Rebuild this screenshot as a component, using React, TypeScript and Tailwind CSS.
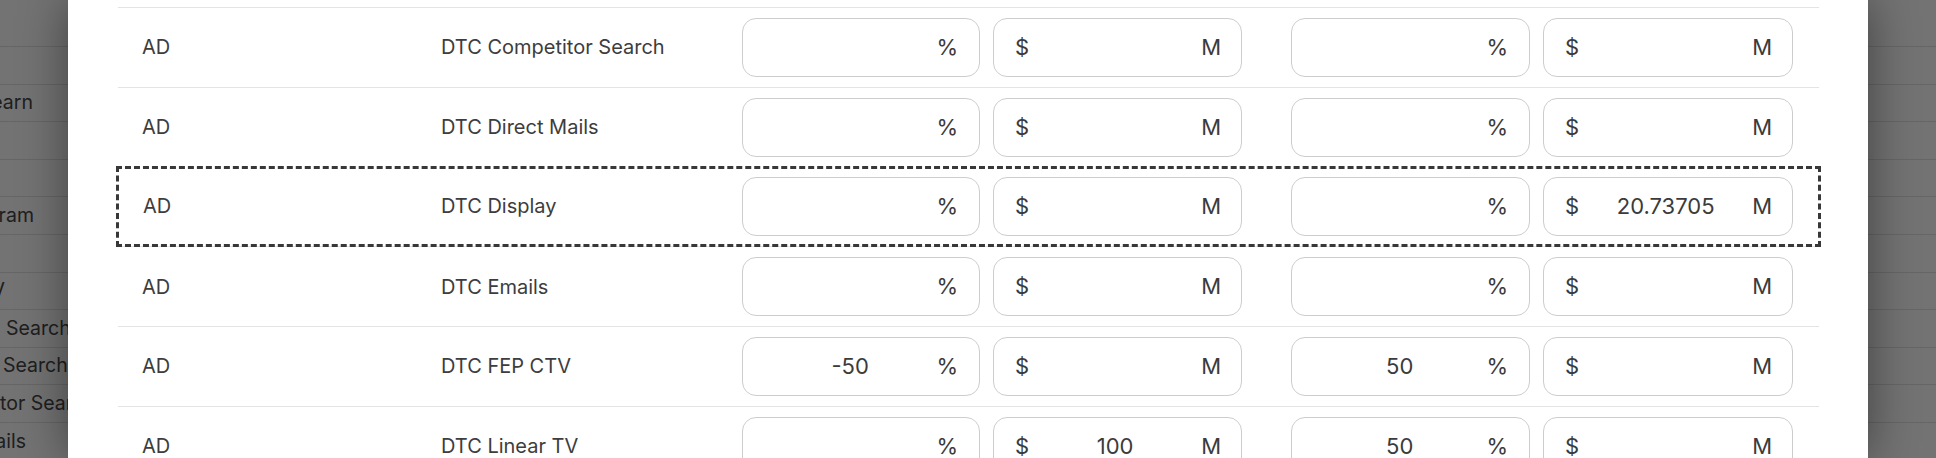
import React from "react";

type Cell = { pct?: string; amt?: string };
type Row = { a: string; b: string; c3: Cell; c4: Cell; focus?: boolean };

const rows: Row[] = [
  { a: "AD", b: "DTC Competitor Search", c3: {}, c4: {} },
  { a: "AD", b: "DTC Direct Mails", c3: {}, c4: {} },
  { a: "AD", b: "DTC Display", c3: {}, c4: { amt: "20.73705" }, focus: true },
  { a: "AD", b: "DTC Emails", c3: {}, c4: {} },
  { a: "AD", b: "DTC FEP CTV", c3: { pct: "-50" }, c4: { pct: "50" } },
  { a: "AD", b: "DTC Linear TV", c3: { amt: "100" }, c4: { pct: "50" } },
];

// underlying page rows: either right-anchored (end) or left-started (start)
const bgRows: { text: string; end?: number; start?: number }[] = [
  { text: "" },
  { text: "" },
  { text: "Paid Learn", end: 33 },
  { text: "" },
  { text: "" },
  { text: "Instagram", end: 34 },
  { text: "" },
  { text: "DTC CTV", end: 5 },
  { text: "Search", start: 6 },
  { text: "Search", start: 3 },
  { text: "tor Search", start: 0 },
  { text: "DTC Emails", end: 26 },
];

function PctBox({ value, w }: { value?: string; w: string }) {
  return (
    <div
      className={`${w} h-[59px] flex items-center rounded-[14px] border border-[#cdcdcd] bg-white pl-[21px] pr-[21px] text-[22px] text-[#3b3b3b]`}
    >
      <div className="flex-1 text-center">{value ?? ""}</div>
      <span>%</span>
    </div>
  );
}

function AmtBox({ value, w }: { value?: string; w: string }) {
  return (
    <div
      className={`${w} h-[59px] flex items-center rounded-[14px] border border-[#cdcdcd] bg-white pl-[21px] pr-[20px] text-[22px] text-[#3b3b3b]`}
    >
      <span>$</span>
      <div className="flex-1 text-center">{value ?? ""}</div>
      <span>M</span>
    </div>
  );
}

export default function App() {
  return (
    <div
      className="relative w-[1936px] h-[458px] overflow-hidden bg-white"
      style={{ fontFamily: "Inter, 'Noto Sans', sans-serif" }}
    >
      {/* underlying page */}
      <div className="flex flex-col">
        {bgRows.map((r, i) => (
          <div
            key={i}
            className={`${i === 0 ? "h-[47px]" : "h-[37.6px]"} border-b border-[#e2e2e2] flex items-center whitespace-nowrap text-[19.5px] text-[#454545]`}
          >
            {r.text && r.end !== undefined ? (
              <div className="flex justify-end" style={{ width: r.end }}>
                <span>{r.text}</span>
              </div>
            ) : null}
            {r.text && r.start !== undefined ? (
              <span style={{ marginLeft: r.start }}>{r.text}</span>
            ) : null}
          </div>
        ))}
      </div>

      {/* overlay */}
      <div className="absolute inset-0 bg-black/[0.55] flex justify-center">
        <div className="w-[1800px] h-full bg-white shadow-[0_0_45px_rgba(0,0,0,0.45)] pl-[50px] pr-[49px] pt-[7px]">
          <div className="flex flex-col text-[20px] text-[#3d3d3d]">
            {rows.map((r, i) => (
              <div
                key={i}
                className={
                  r.focus
                    ? "relative z-10 -mx-[2px] -my-[1px] h-[81.75px] border-[3px] border-dashed border-[#383838] grid grid-cols-[295px_298px_554px_554px] items-center"
                    : "h-[79.75px] border-t border-[#e3e3e3] grid grid-cols-[295px_298px_554px_554px] items-center"
                }
              >
                <div className="pl-[24px]">{r.a}</div>
                <div className={r.focus ? "pl-[27px]" : "pl-[28px]"}>{r.b}</div>
                <div className={`${r.focus ? "pl-[30px]" : "pl-[31px]"} flex gap-[13px]`}>
                  <PctBox value={r.c3.pct} w="w-[238px]" />
                  <AmtBox value={r.c3.amt} w="w-[249px]" />
                </div>
                <div className={`${r.focus ? "pl-[25px]" : "pl-[26px]"} flex gap-[13px]`}>
                  <PctBox value={r.c4.pct} w="w-[239px]" />
                  <AmtBox value={r.c4.amt} w="w-[250px]" />
                </div>
              </div>
            ))}
          </div>
        </div>
      </div>
    </div>
  );
}
